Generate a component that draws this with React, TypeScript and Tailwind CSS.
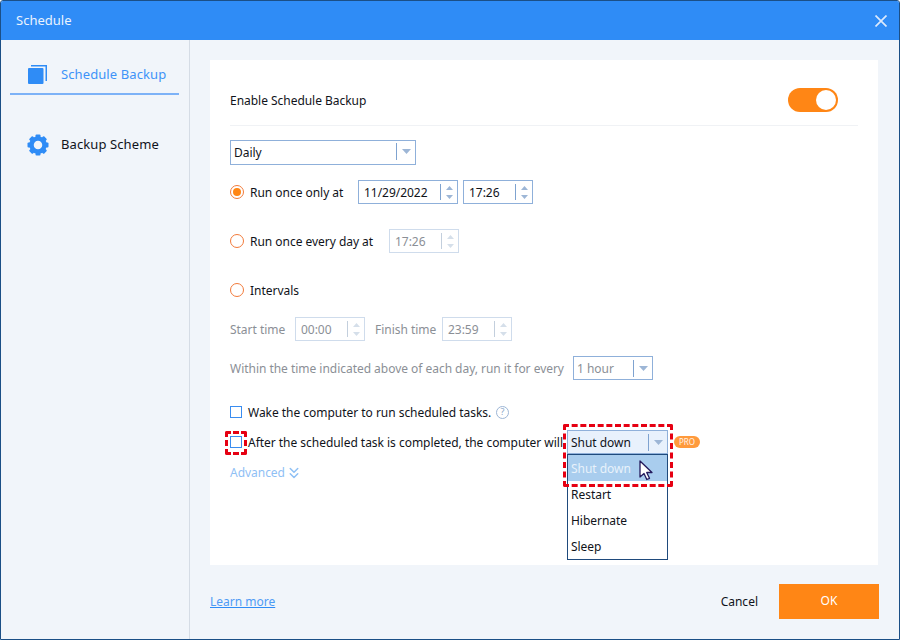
import { ChevronsDown } from "lucide-react";

const font = { fontFamily: '"Noto Sans", sans-serif' };

// pt-[2px] drops the text 1px inside centered rows, where the reference sits
function T({ children, className = "" }: { children: React.ReactNode; className?: string }) {
  return <span className={`whitespace-nowrap pt-[2px] ${className}`}>{children}</span>;
}

function Arrow({ up, light, small }: { up?: boolean; light?: boolean; small?: boolean }) {
  return (
    <svg
      width={small ? 7 : 9}
      height={small ? 4 : 5}
      viewBox="0 0 9 5"
      preserveAspectRatio="none"
      className={light ? "text-[#d5dfea]" : "text-[#9db6d6]"}
    >
      <path d={up ? "M4.5 0L9 5H0z" : "M0 0h9L4.5 5z"} fill="currentColor" />
    </svg>
  );
}

function Spin({ value, disabled, className }: { value: string; disabled?: boolean; className: string }) {
  return (
    <div
      className={`flex h-[24px] shrink-0 items-center border pl-[5px] ${disabled ? "border-[#cfdcec] text-[#8b8f96]" : "border-[#8fb0da] text-[#10131a]"} ${className}`}
    >
      <T className="flex-1">{value}</T>
      <span className={`h-[16px] w-px ${disabled ? "bg-[#c3cfdd]" : "bg-[#7fa3d0]"}`} />
      <span className="flex w-[16px] flex-col items-center gap-[5px]">
        <Arrow up small light={disabled} />
        <Arrow small light={disabled} />
      </span>
    </div>
  );
}

function Select({ value, className }: { value: string; className: string }) {
  return (
    <div className={`flex shrink-0 items-center border border-[#8fb0da] pl-[3px] ${className}`}>
      <T className="flex-1">{value}</T>
      <span className="h-[17px] w-px bg-[#7fa3d0]" />
      <span className="flex w-[18px] justify-center">
        <Arrow />
      </span>
    </div>
  );
}

function Radio({ checked }: { checked?: boolean }) {
  return (
    <span className="flex h-[14px] w-[14px] shrink-0 items-center justify-center rounded-full border border-[#f27a3a] bg-white">
      {checked && <span className="h-[8px] w-[8px] rounded-full bg-[#ff8615]" />}
    </span>
  );
}

function Check() {
  return <span className="h-[12px] w-[12px] shrink-0 border border-[#3a8df0] bg-white" />;
}

function Gear() {
  const angles = [0, 45, 90, 135, 180, 225, 270, 315];
  return (
    <svg width="22" height="22" viewBox="0 0 22 22">
      {angles.map((a) => (
        <rect key={a} x="8.500" y="0.500" width="5" height="5" rx="1" fill="#2f8cf6" transform={`rotate(${a} 11 11)`} />
      ))}
      <circle cx="11" cy="11" r="6.500" fill="none" stroke="#2f8cf6" strokeWidth="4.500" />
    </svg>
  );
}

export default function App() {
  return (
    <div
      style={font}
      className="relative flex h-[640px] w-[900px] flex-col overflow-hidden rounded-t-[3px] border border-[#1b4f86] bg-[#f1f5fa] text-[12px] tracking-[-0.03px] text-[#10131a]"
    >
      {/* title bar */}
      <div className="flex h-[39px] shrink-0 items-center justify-between bg-[#2f8cf6] pl-[15px] pr-[12px] text-[13px] tracking-normal text-[#eaf3fe]">
        <span>Schedule</span>
        <svg width="12" height="12" viewBox="0 0 12 12" className="text-[#dbe9fc]">
          <path d="M0.500 0.500l11 11M11.500 0.500l-11 11" stroke="currentColor" strokeWidth="1.700" />
        </svg>
      </div>

      <div className="flex min-h-0 flex-1">
        {/* sidebar */}
        <div className="w-[189px] shrink-0 border-r border-[#d5dce5] pl-[9px] pr-[9px] text-[13px] tracking-[0.1px]">
          <div className="mr-[1px] flex h-[55px] items-center gap-[14px] border-b-[2px] border-[#7db2f7] pl-[18px] pt-[16px] text-[#3e93f8]">
            <svg width="19" height="19" viewBox="0 0 19 19">
              <path d="M3 0h16v16h-1.500V1.500H3z" fill="#2f8cf6" />
              <rect x="0" y="3" width="15.500" height="16" rx="1" fill="#2f8cf6" />
            </svg>
            <span>Schedule Backup</span>
          </div>
          <div className="mt-[39px] flex items-center gap-[12px] pl-[17px]">
            <Gear />
            <span>Backup Scheme</span>
          </div>
        </div>

        {/* main */}
        <div className="flex min-w-0 flex-1 flex-col pl-[20px] pr-[21px] pt-[20px]">
          <div className="relative flex h-[505px] flex-col bg-white px-[20px]">
            <div className="flex h-[66px] shrink-0 items-center justify-between border-b border-[#f0f2f5] pt-[15px]">
              <T>Enable Schedule Backup</T>
              <span className="mr-[20px] flex h-[24px] w-[50px] items-center justify-end rounded-full bg-[#ff8615] pr-[2px]">
                <span className="h-[20px] w-[20px] rounded-full bg-white" />
              </span>
            </div>

            <Select value="Daily" className="mt-[14px] h-[25px] w-[186px] pb-[2px]" />

            <div className="mt-[15px] flex h-[24px] shrink-0 items-center">
              <Radio checked />
              <T className="ml-[6px] w-[108px]">Run once only at</T>
              <Spin value="11/29/2022" className="w-[100px]" />
              <Spin value="17:26" className="ml-[5px] w-[70px]" />
            </div>

            <div className="mt-[25px] flex h-[24px] shrink-0 items-center">
              <Radio />
              <T className="ml-[6px] w-[139px]">Run once every day at</T>
              <Spin value="17:26" disabled className="w-[70px]" />
            </div>

            <div className="mt-[25px] flex h-[24px] shrink-0 items-center">
              <Radio />
              <T className="ml-[6px]">Intervals</T>
            </div>

            <div className="mt-[15px] flex h-[24px] shrink-0 items-center text-[#8b8f96]">
              <T className="w-[65px]">Start time</T>
              <Spin value="00:00" disabled className="w-[70px]" />
              <T className="ml-[10px] w-[67px]">Finish time</T>
              <Spin value="23:59" disabled className="w-[70px]" />
            </div>

            <div className="mt-[15px] flex h-[24px] shrink-0 items-center text-[#8b8f96]">
              <T className="w-[343px]">Within the time indicated above of each day, run it for every</T>
              <Select value="1 hour" className="h-[24px] w-[80px]" />
            </div>

            <div className="mt-[20px] flex h-[24px] shrink-0 items-center">
              <Check />
              <T className="ml-[6px] w-[248px]">Wake the computer to run scheduled tasks.</T>
              <span className="flex h-[13px] w-[13px] items-center justify-center rounded-full border border-[#9db6d6] text-[9px] tracking-normal text-[#8ba6c8]">
                ?
              </span>
            </div>

            <div className="mt-[6px] flex h-[24px] shrink-0 items-center">
              <Check />
              <T className="ml-[6px] w-[319px]">After the scheduled task is completed, the computer will</T>
              <Select value="Shut down" className="h-[24px] w-[101px] bg-[#e8f1fc]" />
              <span className="ml-[6px] flex h-[12px] w-[26px] items-center justify-center rounded-full bg-[#ff9a3c] text-[8px] text-[#fff3e6]">
                PRO
              </span>
            </div>

            <div className="mt-[6px] flex h-[24px] shrink-0 items-center text-[#8fc0f5]">
              <T>Advanced</T>
              <ChevronsDown className="mt-[1px] h-[18px] w-[18px]" strokeWidth={2} />
            </div>

            {/* open dropdown */}
            <div className="absolute left-[357px] top-[394px] flex w-[101px] flex-col border border-[#1f4a7c] bg-white">
              <div className="flex h-[26px] items-center bg-[#a9cdee] pl-[3px] text-[#e8f2fb]"><T>Shut down</T></div>
              <div className="flex h-[26px] items-center pl-[3px]"><T>Restart</T></div>
              <div className="flex h-[26px] items-center pl-[3px]"><T>Hibernate</T></div>
              <div className="flex h-[26px] items-center pl-[3px]"><T>Sleep</T></div>
            </div>

            {/* annotations */}
            <div className="absolute left-[353px] top-[364px] h-[63px] w-[110px] rounded-[2px] border-[3px] border-dashed border-[#e60012]" />
            <div className="absolute left-[15px] top-[371px] h-[24px] w-[22px] rounded-[2px] border-[3px] border-dashed border-[#e60012]" />

            {/* mouse cursor */}
            <svg width="14" height="21" viewBox="0 0 14 21" className="absolute left-[429px] top-[400px]">
              <path d="M1 1v16l4-3.500 2.800 6 2.700-1.200-2.800-5.800H13z" fill="#fff" stroke="#241a5c" strokeWidth="1.300" strokeLinejoin="round" />
            </svg>
          </div>

          {/* footer */}
          <div className="flex flex-1 items-center justify-between pb-[2px] tracking-normal">
            <T className="text-[#4f9bf5] underline decoration-[#2f8cf6]">Learn more</T>
            <div className="mr-[-1px] flex items-center">
              <T>Cancel</T>
              <button className="ml-[21px] h-[35px] w-[100px] bg-[#ff8615] text-white">OK</button>
            </div>
          </div>
        </div>
      </div>
    </div>
  );
}
